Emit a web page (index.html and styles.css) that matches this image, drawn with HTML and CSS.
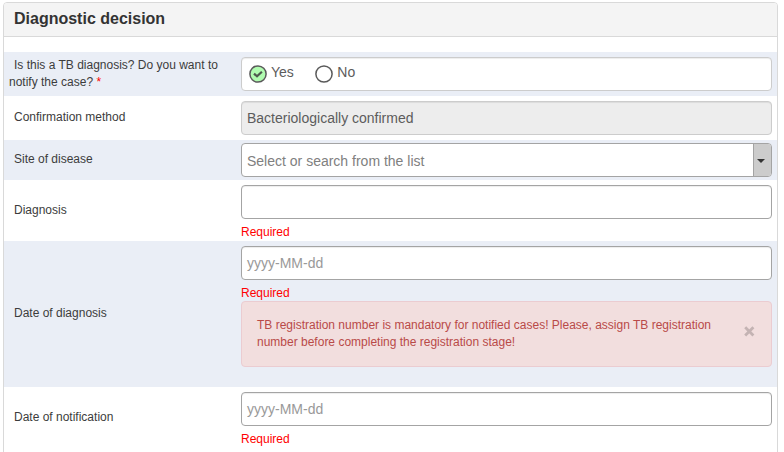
FILE: index.html
```html
<!DOCTYPE html>
<html lang="en">
<head>
<meta charset="utf-8">
<title>Diagnostic decision</title>
<link rel="stylesheet" href="styles.css">
</head>
<body>
<section class="panel">
  <h3 class="panel-heading">Diagnostic decision</h3>
  <div class="panel-body">
    <div class="row row-tall striped">
      <div class="label">Is this a TB diagnosis? Do you want to notify the case? <span class="star">*</span></div>
      <div class="value">
        <div class="control choices">
          <span class="choice">
            <svg width="18" height="18" viewBox="0 0 18 18"><circle cx="9" cy="9" r="8.1" fill="#b0fcb0" stroke="#5a5a5a" stroke-width="1.5"/><path d="M5 8.6l3 2.7 4.9-4.6" fill="none" stroke="#4f5a4f" stroke-width="2.2"/></svg>
            <span>Yes</span>
          </span>
          <span class="choice">
            <svg width="18" height="18" viewBox="0 0 18 18"><circle cx="9" cy="9" r="8.1" fill="#fff" stroke="#5a5a5a" stroke-width="1.5"/></svg>
            <span>No</span>
          </span>
        </div>
      </div>
    </div>
    <div class="row row-tall">
      <div class="label label-raised">Confirmation method</div>
      <div class="value"><div class="control disabled">Bacteriologically confirmed</div></div>
    </div>
    <div class="row row-select striped">
      <div class="label">Site of disease</div>
      <div class="value">
        <div class="control select"><span class="select-text">Select or search from the list</span><span class="select-toggle"><span class="caret"></span></span></div>
      </div>
    </div>
    <div class="row row-required">
      <div class="label">Diagnosis</div>
      <div class="value"><div class="control"></div><div class="required">Required</div></div>
    </div>
    <div class="row row-alert striped">
      <div class="label label-raised">Date of diagnosis</div>
      <div class="value">
        <div class="control placeholder">yyyy-MM-dd</div>
        <div class="required">Required</div>
        <div class="alert">
          <div class="alert-text">TB registration number is mandatory for notified cases! Please, assign TB registration number before completing the registration stage!</div>
          <svg class="close" width="11" height="11" viewBox="0 0 11 11"><path d="M1.2 1.2l8.2 8.2M9.4 1.2l-8.2 8.2" stroke="#c4b3b3" stroke-width="2.8"/></svg>
        </div>
      </div>
    </div>
    <div class="row row-required">
      <div class="label">Date of notification</div>
      <div class="value"><div class="control placeholder">yyyy-MM-dd</div><div class="required">Required</div></div>
    </div>
  </div>
</section>
</body>
</html>
```
FILE: styles.css
```css
* { box-sizing: border-box; }
html, body { height: 100%; overflow: hidden; }
body {
  margin: 0;
  padding: 2px 6px 0 3px;
  background: #fff;
  color: #3c3c3c;
  font: 12px/17px "Liberation Sans", Arial, sans-serif;
}
.panel {
  height: 460px;
  border: 1px solid #d9d9d9;
  border-radius: 4px;
}
.panel-heading {
  height: 34px;
  margin: 0;
  padding: 0 10px;
  border-bottom: 1px solid #d9d9d9;
  border-radius: 3px 3px 0 0;
  background: #f4f4f4;
  color: #333;
  font-size: 16px;
  line-height: 31px;
}
.panel-body { padding-top: 15px; }
.row {
  display: grid;
  grid-template-columns: 237px 531px;
  padding-top: 5px;
}
.striped { background: #eaeef6; }
.row-tall { height: 44px; }
.row-select { height: 40px; padding-top: 3px; }
.row-required { height: 61px; }
.row-alert { height: 146px; }
.label {
  align-self: center;
  padding: 0 15px 0 5px;
  margin-top: -5px;
  text-indent: 5px;
}
.label-raised { margin-top: -7px; }
.star { color: #f00; }
.control {
  display: flex;
  align-items: center;
  height: 34px;
  padding: 0 5px;
  border: 1px solid #a4a4a4;
  border-radius: 4px;
  background: #fff;
  box-shadow: inset 0 1px 1px rgba(0, 0, 0, .075);
  color: #5c5c5c;
  font-size: 14px;
  line-height: 20px;
}
.disabled { border-color: #ccc; background: #ededed; }
.placeholder { color: #999; }
.choices { align-items: flex-start; gap: 21.5px; padding: 5px 7px; border-color: #ccc; }
.choice { display: flex; gap: 4px; }
.choice svg { margin-top: 2px; }
.choice span { margin-top: -1px; }
.select { padding-right: 0; box-shadow: none; color: #808080; }
.select-text { flex: 1; padding-top: 2px; }
.select-toggle {
  display: flex;
  align-items: center;
  justify-content: center;
  width: 18px;
  height: 32px;
  border-left: 1px solid #a4a4a4;
  border-radius: 0 3px 3px 0;
  background: #ccc;
}
.caret {
  border: 4px solid transparent;
  border-top-color: #333;
  border-bottom: 0;
  margin: 2px 3px 0 0;
}
.required { height: 21px; padding-top: 5px; line-height: 16px; color: #f00; }
.alert {
  display: flex;
  justify-content: space-between;
  height: 66px;
  padding: 15px;
  border: 1px solid #ebccd1;
  border-radius: 4px;
  background: #f2dede;
  color: #b94a48;
}
.alert-text { width: 465px; }
.close { margin: 9px 1px 0 0; }
```
